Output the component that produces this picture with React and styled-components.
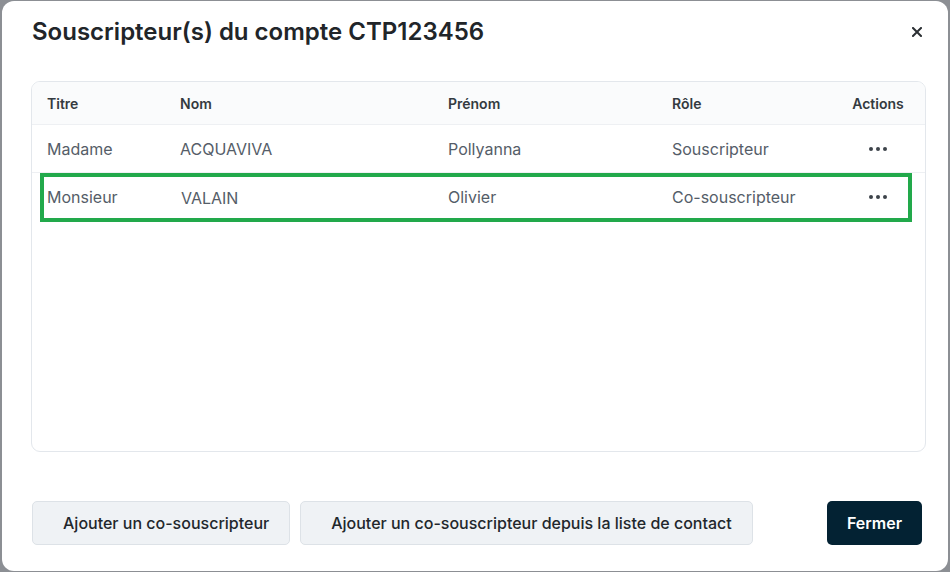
import styled, { createGlobalStyle } from "styled-components";

const GlobalStyle = createGlobalStyle`
  html, body {
    margin: 0;
    padding: 0;
    height: 100%;
  }
  body {
    font-family: Inter, "Noto Sans", sans-serif;
    background: #8c8f94;
  }
  #root {
    height: 100%;
  }
`;

const subscribers = [
  { title: "Madame", name: "ACQUAVIVA", firstName: "Pollyanna", role: "Souscripteur" },
  { title: "Monsieur", name: "VALAIN", firstName: "Olivier", role: "Co-souscripteur", selected: true },
];

const App = () => {
  return (
    <>
      <GlobalStyle />
      <Backdrop>
        <Modal>
          <Header>
            <Title>Souscripteur(s) du compte CTP123456</Title>
            <CloseButton aria-label="Fermer">
              <svg width="10" height="10" viewBox="0 0 10 10">
                <path d="M1 1 L9 9 M9 1 L1 9" stroke="#2b2f33" strokeWidth="2" strokeLinecap="square" />
              </svg>
            </CloseButton>
          </Header>

          <TableCard>
            <HeadRow>
              <Cell>Titre</Cell>
              <Cell>Nom</Cell>
              <Cell>Prénom</Cell>
              <Cell>Rôle</Cell>
              <ActionCell>Actions</ActionCell>
            </HeadRow>
            {subscribers.map((s) => (
              <Row key={s.name} $selected={s.selected}>
                <Cell>{s.title}</Cell>
                <Cell $shift={s.selected}>{s.name}</Cell>
                <Cell>{s.firstName}</Cell>
                <Cell>{s.role}</Cell>
                <ActionCell>
                  <Dots>
                    <span />
                    <span />
                    <span />
                  </Dots>
                </ActionCell>
              </Row>
            ))}
          </TableCard>

          <Footer>
            <SecondaryButton>Ajouter un co-souscripteur</SecondaryButton>
            <SecondaryButton>Ajouter un co-souscripteur depuis la liste de contact</SecondaryButton>
            <PrimaryButton>Fermer</PrimaryButton>
          </Footer>
        </Modal>
      </Backdrop>
    </>
  );
};

const Backdrop = styled.div`
  height: 100%;
  box-sizing: border-box;
  padding: 1px 2px 1px 2px;
  display: flex;
`;

const Modal = styled.div`
  flex: 1;
  background: #fff;
  border-radius: 12px;
  display: flex;
  flex-direction: column;
`;

const Header = styled.div`
  display: flex;
  align-items: center;
  justify-content: space-between;
  padding: 13px 22px 0 30px;
  height: 34px;
`;

const Title = styled.h2`
  margin: 0;
  font-size: 24px;
  font-weight: 600;
  color: #212529;
  letter-spacing: 0;
`;

const CloseButton = styled.button`
  border: 0;
  background: none;
  padding: 4px;
  margin-top: 2px;
  display: flex;
  cursor: pointer;
`;

const TableCard = styled.div`
  margin: 33px 22px 0 29px;
  height: 371px;
  box-sizing: border-box;
  border: 1px solid #e3e7ec;
  border-radius: 9px;
  overflow: hidden;
`;

const RowGrid = styled.div`
  display: grid;
  grid-template-columns: 133px 268px 224px 1fr 52px;
  align-items: center;
  padding: 0 21px 0 15px;
  border-bottom: 1px solid #eef0f3;
`;

const HeadRow = styled(RowGrid)`
  height: 42px;
  background: #fafbfc;
  font-size: 14px;
  font-weight: 600;
  color: #343a40;
`;

const Row = styled(RowGrid)`
  position: relative;
  height: 47px;
  font-size: 16px;
  color: #555d68;
  border-bottom: ${(p) => (p.$selected ? "0" : "1px solid #eef0f3")};

  &::after {
    content: "";
    display: ${(p) => (p.$selected ? "block" : "none")};
    position: absolute;
    top: 0;
    bottom: -2px;
    left: 8px;
    right: 13px;
    border: 4px solid #22a94b;
    pointer-events: none;
  }
`;

const Cell = styled.div`
  white-space: nowrap;
  padding-left: ${(p) => (p.$shift ? "1px" : "0")};
  padding-top: ${(p) => (p.$shift ? "2px" : "0")};
`;

const ActionCell = styled.div`
  display: flex;
  justify-content: center;
  white-space: nowrap;
`;

const Dots = styled.div`
  display: flex;
  gap: 3px;
  span {
    width: 4px;
    height: 4px;
    border-radius: 50%;
    background: #3d434a;
  }
`;

const Footer = styled.div`
  display: flex;
  align-items: center;
  gap: 10px;
  padding: 49px 26px 0 30px;
`;

const SecondaryButton = styled.button`
  height: 44px;
  padding: 0 20px 0 30px;
  font-family: Inter, "Noto Sans", sans-serif;
  font-size: 16px;
  font-weight: 500;
  color: #22272c;
  background: #eff2f5;
  border: 1px solid #dde2e7;
  border-radius: 5px;
  white-space: nowrap;
`;

const PrimaryButton = styled.button`
  margin-left: auto;
  height: 44px;
  padding: 0 20px;
  font-family: Inter, "Noto Sans", sans-serif;
  font-size: 16px;
  font-weight: 600;
  color: #fff;
  background: #032233;
  border: 0;
  border-radius: 5px;
`;

export default App;
